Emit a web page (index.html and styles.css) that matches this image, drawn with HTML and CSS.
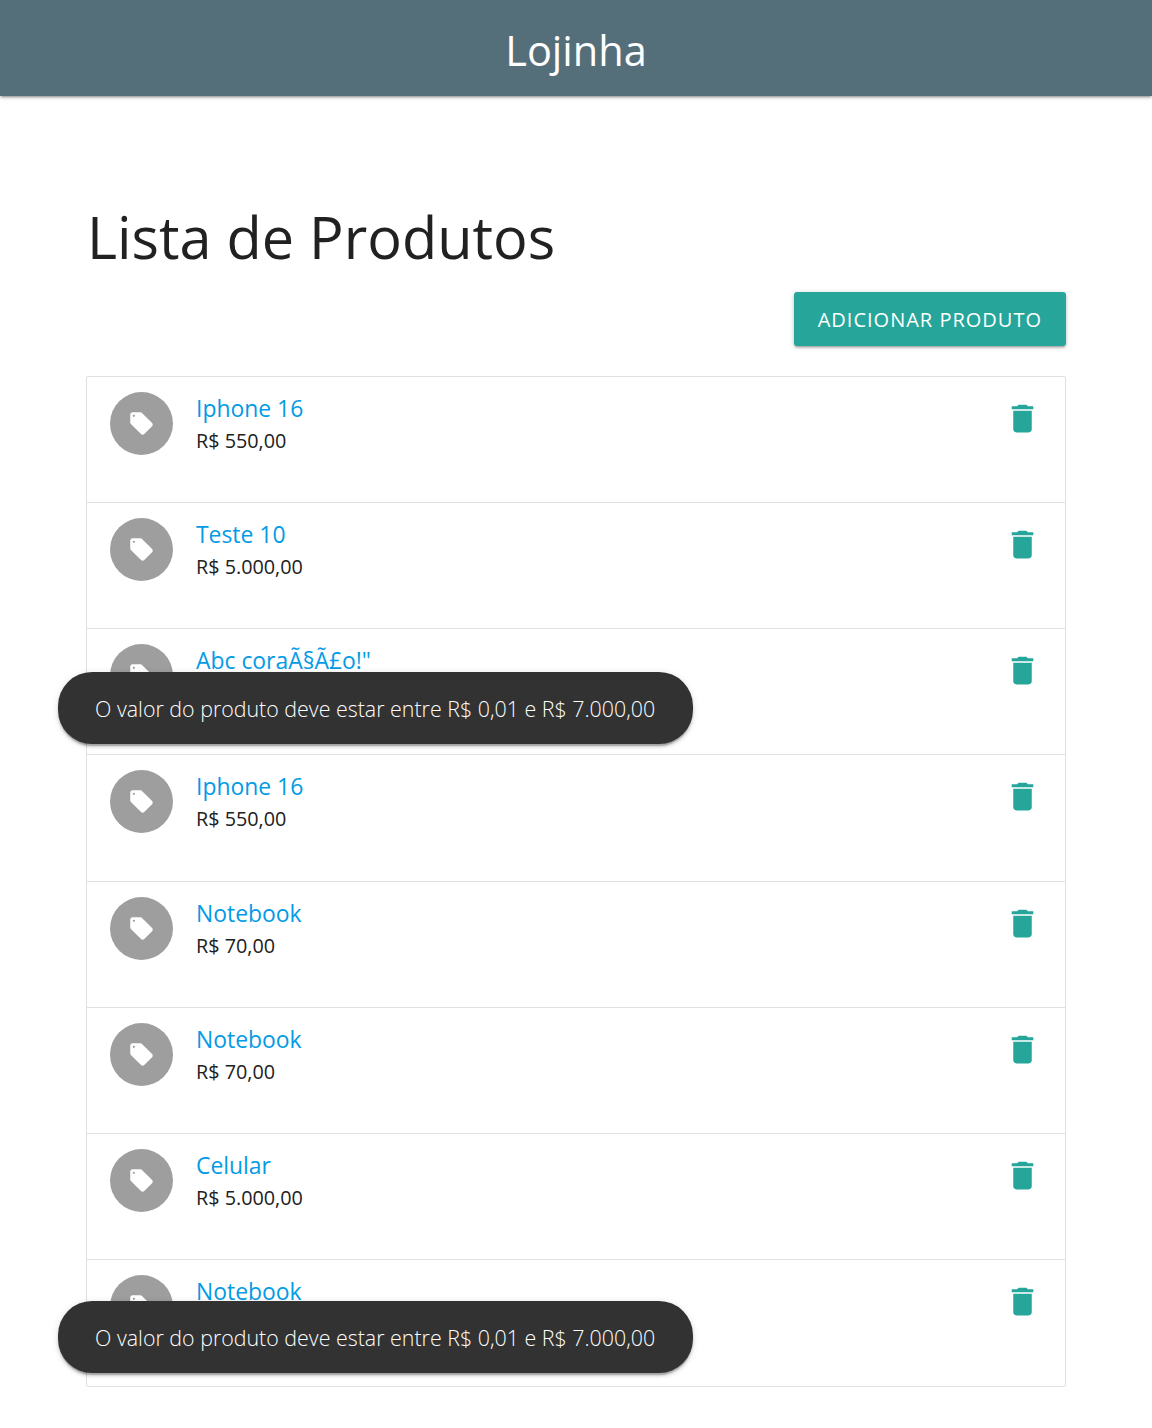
FILE: index.html
```html
<!DOCTYPE html>
<html lang="pt-BR">
  <head>
    <meta charset="UTF-8" />
    <meta name="viewport" content="width=device-width, initial-scale=1.0" />
    <title>Lojinha</title>
    <link rel="stylesheet" href="styles.css">
  </head>
  <body>
    <svg class="defs" width="0" height="0">
      <symbol id="tag" viewBox="0 0 24 24">
        <path fill-rule="evenodd" d="M21.41 11.58l-9-9C12.05 2.22 11.55 2 11 2H4c-1.1 0-2 .9-2 2v7c0 .55.22 1.05.59 1.42l9 9c.36.36.86.58 1.41.58s1.05-.22 1.41-.59l7-7c.37-.36.59-.86.59-1.41s-.23-1.06-.59-1.42zM5.2 6.200a1 1 0 1 1 0-2 1 1 0 0 1 0 2z"/>
      </symbol>
      <symbol id="trash" viewBox="0 0 24 24">
        <path d="M6 19c0 1.1.9 2 2 2h8c1.100 0 2-.9 2-2V7H6v12zM19 4h-3.500l-1-1h-5l-1 1H5v2h14V4z"/>
      </symbol>
    </svg>

    <header class="topbar">Lojinha</header>

    <main class="container">
      <h1 class="page-title">Lista de Produtos</h1>
      <div class="actions">
        <a class="btn" href="#">Adicionar produto</a>
      </div>

      <ul class="products">
        <li class="product">
          <span class="avatar"><svg><use href="#tag"/></svg></span>
          <div class="info">
            <a class="name" href="#">Iphone 16</a>
            <p class="price">R$ 550,00</p>
          </div>
          <a class="delete" href="#"><svg><use href="#trash"/></svg></a>
        </li>
        <li class="product">
          <span class="avatar"><svg><use href="#tag"/></svg></span>
          <div class="info">
            <a class="name" href="#">Teste 10</a>
            <p class="price">R$ 5.000,00</p>
          </div>
          <a class="delete" href="#"><svg><use href="#trash"/></svg></a>
        </li>
        <li class="product">
          <span class="avatar"><svg><use href="#tag"/></svg></span>
          <div class="info">
            <a class="name" href="#">Abc coraÃ§Ã£o!"</a>
            <p class="price">R$ 10,00</p>
          </div>
          <a class="delete" href="#"><svg><use href="#trash"/></svg></a>
        </li>
        <li class="product">
          <span class="avatar"><svg><use href="#tag"/></svg></span>
          <div class="info">
            <a class="name" href="#">Iphone 16</a>
            <p class="price">R$ 550,00</p>
          </div>
          <a class="delete" href="#"><svg><use href="#trash"/></svg></a>
        </li>
        <li class="product">
          <span class="avatar"><svg><use href="#tag"/></svg></span>
          <div class="info">
            <a class="name" href="#">Notebook</a>
            <p class="price">R$ 70,00</p>
          </div>
          <a class="delete" href="#"><svg><use href="#trash"/></svg></a>
        </li>
        <li class="product">
          <span class="avatar"><svg><use href="#tag"/></svg></span>
          <div class="info">
            <a class="name" href="#">Notebook</a>
            <p class="price">R$ 70,00</p>
          </div>
          <a class="delete" href="#"><svg><use href="#trash"/></svg></a>
        </li>
        <li class="product">
          <span class="avatar"><svg><use href="#tag"/></svg></span>
          <div class="info">
            <a class="name" href="#">Celular</a>
            <p class="price">R$ 5.000,00</p>
          </div>
          <a class="delete" href="#"><svg><use href="#trash"/></svg></a>
        </li>
        <li class="product">
          <span class="avatar"><svg><use href="#tag"/></svg></span>
          <div class="info">
            <a class="name" href="#">Notebook</a>
            <p class="price">R$ 70,00</p>
          </div>
          <a class="delete" href="#"><svg><use href="#trash"/></svg></a>
        </li>
      </ul>
    </main>

    <div class="toast toast-one">O valor do produto deve estar entre R$ 0,01 e R$ 7.000,00</div>
    <div class="toast toast-two">O valor do produto deve estar entre R$ 0,01 e R$ 7.000,00</div>
  </body>
</html>
```

FILE: styles.css
```css
body {
  margin: 0;
  position: relative;
  min-height: 1428px;
  background: #fff;
  color: #212121;
  font-family: "Open Sans", "Noto Sans", sans-serif;
  font-size: 20px;
}

a {
  text-decoration: none;
}

.defs {
  position: absolute;
}

.topbar {
  height: 96px;
  line-height: 100px;
  text-align: center;
  background: #546e7a;
  color: #fff;
  font-size: 41.500px;
  box-shadow: 0 2px 2px 0 rgba(0, 0, 0, 0.14), 0 3px 1px -2px rgba(0, 0, 0, 0.12), 0 1px 5px 0 rgba(0, 0, 0, 0.2);
}

.container {
  width: 980px;
  margin: 0 auto;
}

.page-title {
  margin: 0;
  padding: 99px 0 0 1px;
  font-size: 57.6px;
  font-weight: 400;
  line-height: 84px;
}

.actions {
  display: flex;
  justify-content: flex-end;
  margin-top: 13px;
}

.btn {
  display: block;
  height: 54px;
  padding: 0 24px;
  line-height: 56px;
  border-radius: 3px;
  background: #26a69a;
  color: #fff;
  font-size: 20px;
  letter-spacing: 1px;
  text-transform: uppercase;
  box-shadow: 0 2px 2px 0 rgba(0, 0, 0, 0.14), 0 3px 1px -2px rgba(0, 0, 0, 0.12), 0 1px 5px 0 rgba(0, 0, 0, 0.2);
}

.products {
  list-style: none;
  margin: 30px 0 0;
  padding: 0;
  border: 1px solid #e0e0e0;
  border-radius: 2px;
}

.product {
  display: flex;
  box-sizing: border-box;
  height: 126.15px;
  padding: 15px 24.3px 0 23px;
  border-bottom: 1px solid #e0e0e0;
}

.product:last-child {
  border-bottom: none;
}

.avatar {
  display: flex;
  align-items: center;
  justify-content: center;
  flex: none;
  width: 63px;
  height: 63px;
  border-radius: 50%;
  background: #9e9e9e;
}

.avatar svg {
  width: 27px;
  height: 27px;
  fill: #fff;
}

.info {
  flex: 1;
  margin-left: 23px;
}

.name {
  display: block;
  color: #039be5;
  font-size: 22.9px;
  line-height: 33px;
}

.price {
  margin: 1px 0 0;
  font-size: 19.8px;
  line-height: 30px;
}

.delete svg {
  display: block;
  width: 37px;
  height: 37px;
  margin-top: 8px;
  fill: #26a69a;
}

.toast {
  position: absolute;
  left: 58px;
  box-sizing: border-box;
  width: 635px;
  height: 72px;
  padding: 0 37px;
  line-height: 74px;
  border-radius: 34px;
  background: #323232;
  color: #fff;
  font-size: 21.4px;
  font-weight: 300;
  white-space: nowrap;
  box-shadow: 0 3px 3px 0 rgba(0, 0, 0, 0.14), 0 1px 7px 0 rgba(0, 0, 0, 0.12), 0 3px 1px -1px rgba(0, 0, 0, 0.2);
}

.toast-one {
  top: 672px;
}

.toast-two {
  top: 1301px;
}
```
